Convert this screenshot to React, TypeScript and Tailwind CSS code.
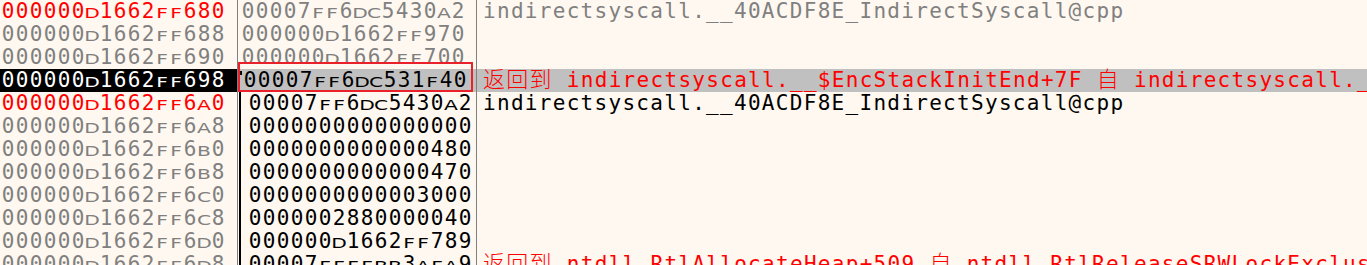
// x64dbg-style stack view

type Row = {
  addr: string;
  val: string;
  comment?: string;
  addrTone: 'red' | 'gray';
  valTone: 'gray' | 'black';
  commentTone?: 'gray' | 'black' | 'red';
  selected?: boolean;
  frame?: 'start' | 'line';
};

const ROWS: Row[] = [
  { addr: '000000D1662FF680', val: '00007FF6DC5430A2', comment: 'indirectsyscall.__40ACDF8E_IndirectSyscall@cpp', addrTone: 'red', valTone: 'gray', commentTone: 'gray' },
  { addr: '000000D1662FF688', val: '000000D1662FF970', addrTone: 'gray', valTone: 'gray' },
  { addr: '000000D1662FF690', val: '000000D1662FF700', addrTone: 'gray', valTone: 'gray' },
  { addr: '000000D1662FF698', val: '00007FF6DC531F40', comment: '返回到 indirectsyscall.__$EncStackInitEnd+7F 自 indirectsyscall.__$EncStackInitStart+1B', addrTone: 'gray', valTone: 'black', commentTone: 'red', selected: true, frame: 'start' },
  { addr: '000000D1662FF6A0', val: '00007FF6DC5430A2', comment: 'indirectsyscall.__40ACDF8E_IndirectSyscall@cpp', addrTone: 'red', valTone: 'black', commentTone: 'black', frame: 'line' },
  { addr: '000000D1662FF6A8', val: '0000000000000000', addrTone: 'gray', valTone: 'black', frame: 'line' },
  { addr: '000000D1662FF6B0', val: '0000000000000480', addrTone: 'gray', valTone: 'black', frame: 'line' },
  { addr: '000000D1662FF6B8', val: '0000000000000470', addrTone: 'gray', valTone: 'black', frame: 'line' },
  { addr: '000000D1662FF6C0', val: '0000000000003000', addrTone: 'gray', valTone: 'black', frame: 'line' },
  { addr: '000000D1662FF6C8', val: '0000002880000040', addrTone: 'gray', valTone: 'black', frame: 'line' },
  { addr: '000000D1662FF6D0', val: '000000D1662FF789', addrTone: 'gray', valTone: 'black', frame: 'line' },
  { addr: '000000D1662FF6D8', val: '00007FFFFBB3AFA9', comment: '返回到 ntdll.RtlAllocateHeap+509 自 ntdll.RtlReleaseSRWLockExclusive+B3', addrTone: 'gray', valTone: 'black', commentTone: 'red', frame: 'line' },
];

const TONE = {
  red: 'text-[#ff0000]',
  gray: 'text-[#808080]',
  black: 'text-black',
};

// hex digits keep full size, letters are drawn as wide small caps like the debugger font
function Hex({ text }: { text: string }) {
  return (
    <>
      {text.split('').map((c, i) => (
        <span
          key={i}
          className={
            /[A-F]/.test(c)
              ? "inline-block w-[14px] scale-x-[1.35] scale-y-[0.92] text-center font-['DejaVu_Sans'] text-[15px]"
              : 'inline-block w-[14px] text-center'
          }
        >
          {c}
        </span>
      ))}
    </>
  );
}

function Comment({ text }: { text: string }) {
  // CJK runs are a bit larger; zero line-height keeps them from pushing the baseline
  const parts = text.split(/([\u4e00-\u9fff]+)/);
  return (
    <>
      {parts.map((p, i) =>
        /[\u4e00-\u9fff]/.test(p) ? (
          <span key={i} className="text-[22px] leading-[0px] font-light">
            {p}
          </span>
        ) : (
          <span key={i}>{p}</span>
        ),
      )}
    </>
  );
}

export default function App() {
  return (
    <div
      className="relative h-[265px] w-full overflow-hidden bg-[#fff8f0] text-[21px] leading-[23px]"
      style={{ fontFamily: "'DejaVu Sans Mono', 'Noto Sans CJK SC', monospace" }}
    >
      {ROWS.map((r) => (
        <div key={r.addr} className="flex h-[23px] whitespace-nowrap">
          {/* address */}
          <div
            className={`w-[237px] shrink-0 pl-[1px] ${
              r.selected ? 'bg-black text-white' : TONE[r.addrTone]
            }`}
          >
            <Hex text={r.addr} />
          </div>
          <div className="w-[1px] shrink-0 bg-[#808080]" />

          {/* value */}
          <div className={`relative flex w-[238px] shrink-0 ${r.selected ? 'bg-[#c0c0c0]' : ''} ${TONE[r.valTone]}`}>
            {r.frame === 'line' && <div className="ml-[1px] h-full w-[2px] shrink-0 bg-black" />}
            {r.frame === 'start' && <div className="ml-[2px] mt-[2px] h-[4px] w-[2px] shrink-0 bg-black" />}
            <div className={r.frame === 'line' ? 'pl-[7px]' : r.frame === 'start' ? 'pl-[1px]' : 'pl-[3px]'}>
              <Hex text={r.val} />
            </div>
          </div>
          <div className="w-[1px] shrink-0 bg-[#808080]" />

          {/* comment */}
          <div
            className={`min-w-0 flex-1 pl-[6px] tracking-[1.3px] ${
              r.selected ? 'bg-[#c0c0c0]' : ''
            } ${r.commentTone ? TONE[r.commentTone] : ''}`}
          >
            {r.comment && <Comment text={r.comment} />}
          </div>
        </div>
      ))}

      {/* red annotation box around the selected value */}
      <div className="pointer-events-none absolute left-[238px] top-[62px] h-[30px] w-[235px] border-2 border-[#e8212b]" />
    </div>
  );
}
